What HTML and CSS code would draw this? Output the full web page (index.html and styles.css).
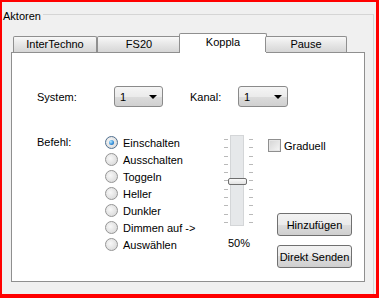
FILE: index.html
```html
<!DOCTYPE html>
<html>
<head>
<meta charset="utf-8">
<link rel="stylesheet" href="styles.css">
</head>
<body>
<div class="frame">
  <div class="group">
    <div class="group-head"><span class="group-title">Aktoren</span><span class="group-line"></span></div>
    <div class="group-body">
      <div class="tabs">
        <div class="tab t1">InterTechno</div>
        <div class="tab t2">FS20</div>
        <div class="tab active">Koppla</div>
        <div class="tab t4">Pause</div>
      </div>
      <div class="panel">
        <div class="row1">
          <span class="lbl lbl-system">System:</span>
          <div class="combo"><span class="combo-val">1</span><i class="arrow"></i></div>
          <span class="lbl lbl-kanal">Kanal:</span>
          <div class="combo combo2"><span class="combo-val">1</span><i class="arrow"></i></div>
        </div>
        <div class="row2">
          <span class="lbl lbl-befehl">Befehl:</span>
          <div class="radios">
            <div class="radio-row"><span class="radio checked"></span>Einschalten</div>
            <div class="radio-row"><span class="radio"></span>Ausschalten</div>
            <div class="radio-row"><span class="radio"></span>Toggeln</div>
            <div class="radio-row"><span class="radio"></span>Heller</div>
            <div class="radio-row"><span class="radio"></span>Dunkler</div>
            <div class="radio-row"><span class="radio"></span>Dimmen auf -&gt;</div>
            <div class="radio-row"><span class="radio"></span>Auswählen</div>
          </div>
          <div class="slider-col">
            <div class="slider">
              <div class="ticks"></div>
              <div class="track"><div class="thumb"></div></div>
              <div class="ticks ticks-r"></div>
            </div>
            <div class="pct">50%</div>
          </div>
          <div class="right-col">
            <div class="check-row"><span class="check"></span>Graduell</div>
            <button class="btn btn-add">Hinzufügen</button>
            <button class="btn btn-send">Direkt Senden</button>
          </div>
        </div>
      </div>
    </div>
  </div>
</div>
</body>
</html>
```

FILE: styles.css
```css
html, body {
  margin: 0;
  padding: 0;
}
body {
  font-family: "Liberation Sans", Arial, sans-serif;
  font-size: 11px;
  color: #000;
  background: #fff;
}
.frame {
  width: 379px;
  height: 298px;
  box-sizing: border-box;
  border-style: solid;
  border-color: #f00;
  border-width: 2px 3px 4px 2px;
  background: #f0f0f0;
  overflow: hidden;
}
.group {
  margin-right: 2px;
}
.group-head {
  display: flex;
  height: 26px;
}
.group-title {
  padding-left: 1px;
  margin-top: 8px;
  line-height: 13px;
}
.group-line {
  flex: 1;
  align-self: flex-end;
  height: 14px;
  box-sizing: border-box;
  border-top: 1px solid #d5d5d5;
  border-right: 1px solid #d5d5d5;
  margin-left: 2px;
}
.group-body {
  border-right: 1px solid #d5d5d5;
  padding: 5px 0 12px 9px;
}
.tabs {
  display: flex;
  align-items: flex-end;
  height: 19px;
  padding-left: 2px;
  position: relative;
  z-index: 1;
}
.tab {
  box-sizing: border-box;
  width: 84px;
  height: 16px;
  border: 1px solid #8f8f8f;
  border-bottom: none;
  border-radius: 2px 2px 0 0;
  background: linear-gradient(#f8f8f8, #e6e6e6 50%, #d6d6d6);
  text-align: center;
  line-height: 15px;
}
.tab.active {
  width: 88px;
  height: 20px;
  margin: 0 -2px -1px -2px;
  background: #fff;
  line-height: 16px;
}
.tab.t4 {
  width: 82px;
}
.panel {
  box-sizing: border-box;
  width: 354px;
  height: 230px;
  border: 1px solid #8f8f8f;
  background: #fff;
  padding: 33px 0 0 25px;
}
.row1 {
  display: flex;
  align-items: center;
  height: 21px;
}
.lbl-system {
  width: 77px;
}
.lbl-kanal {
  width: 48px;
  margin-left: 27px;
}
.combo {
  box-sizing: border-box;
  width: 49px;
  height: 21px;
  border: 1px solid #8a8a8a;
  border-radius: 3px;
  background: linear-gradient(#f5f5f5, #ebebeb 50%, #dcdcdc 50%, #d0d0d0);
  display: flex;
  align-items: center;
  justify-content: space-between;
  padding: 0 5px 0 5px;
}
.combo2 {
  width: 50px;
}
.arrow {
  width: 0;
  height: 0;
  border-left: 4px solid transparent;
  border-right: 4px solid transparent;
  border-top: 4px solid #000;
}
.row2 {
  display: flex;
  margin-top: 27px;
}
.lbl-befehl {
  width: 68px;
  line-height: 17px;
}
.radios {
  width: 119px;
  display: flex;
  flex-direction: column;
}
.radio-row {
  display: flex;
  align-items: center;
  height: 17px;
  gap: 5px;
}
.radio {
  box-sizing: border-box;
  width: 13px;
  height: 13px;
  border-radius: 50%;
  border: 1px solid #959595;
  background: radial-gradient(circle at 40% 40%, #f8f8f8, #dedede 70%, #c9c9c9);
  display: flex;
  align-items: center;
  justify-content: center;
}
.radio.checked {
  border-color: #4f6f8f;
}
.radio.checked::after {
  content: "";
  width: 5px;
  height: 5px;
  border-radius: 50%;
  background: radial-gradient(circle at 35% 35%, #b8ecff, #2f8ad8 60%, #1a4f8c);
}
.slider-col {
  width: 29px;
  margin-top: 1px;
}
.slider {
  display: flex;
  height: 91px;
}
.ticks {
  width: 4px;
  margin-top: 4px;
  height: 85px;
  background: repeating-linear-gradient(to bottom, #b9b9b9 0, #b9b9b9 1px, transparent 1px, transparent 8.3px);
}
.track {
  box-sizing: border-box;
  width: 14px;
  margin: 0 5px 0 2px;
  border: 1px solid #d4d6d8;
  background: #e6e8ea;
  position: relative;
}
.thumb {
  position: absolute;
  left: -3px;
  top: 42px;
  width: 19px;
  height: 7px;
  box-sizing: border-box;
  border: 1px solid #6f6f6f;
  border-radius: 2px;
  background: linear-gradient(#fafafa, #e2e2e2);
}
.pct {
  text-align: center;
  line-height: 13px;
  margin-top: 11px;
  width: 30px;
}
.right-col {
  margin-left: 15px;
  display: flex;
  flex-direction: column;
  align-items: flex-start;
}
.check-row {
  margin-top: 5px;
  display: flex;
  align-items: center;
  height: 13px;
  gap: 3px;
}
.check {
  box-sizing: border-box;
  width: 13px;
  height: 13px;
  border: 1px solid #8f8f8f;
  background: linear-gradient(135deg, #d4d4d4, #f6f6f6);
  box-shadow: inset 0 0 0 1px #e6e6e6;
}
.btn {
  box-sizing: border-box;
  width: 75px;
  height: 23px;
  margin-left: 9px;
  padding: 0;
  border: 1px solid #707070;
  border-radius: 3px;
  background: linear-gradient(#f2f2f2, #ebebeb 50%, #dddddd 50%, #cfcfcf);
  font: inherit;
  color: #000;
}
.btn-add {
  margin-top: 61px;
}
.btn-send {
  margin-top: 9px;
}
```
